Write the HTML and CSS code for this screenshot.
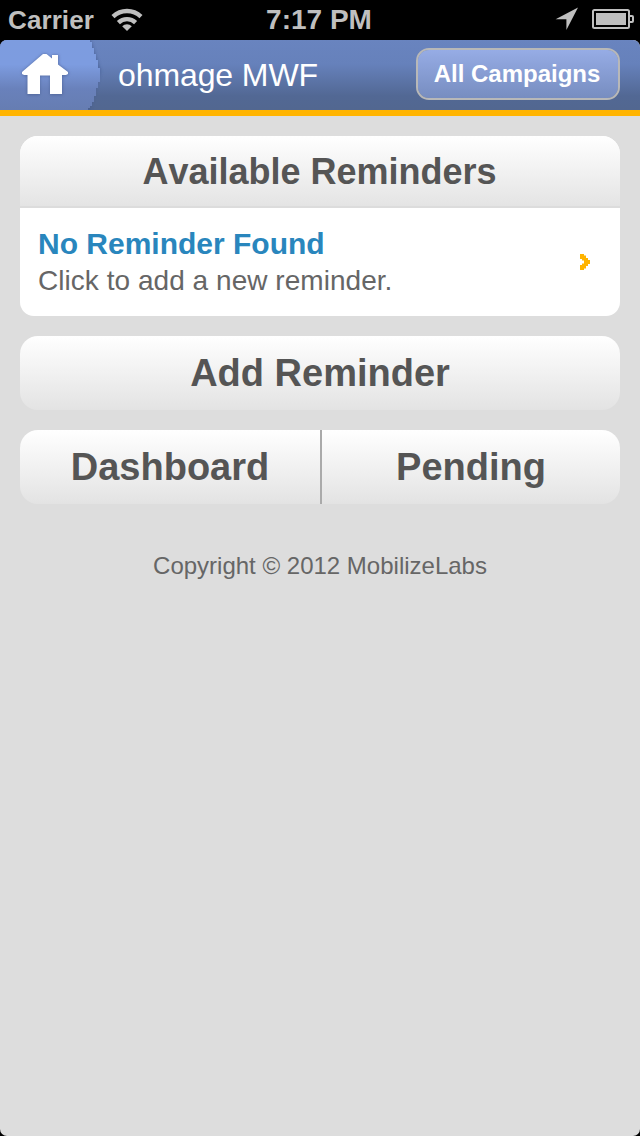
FILE: index.html
```html
<!DOCTYPE html>
<html lang="en">
<head>
<meta charset="utf-8">
<title>ohmage MWF</title>
<link rel="stylesheet" href="styles.css">
</head>
<body>
<div class="status">
  <div class="status-left">
    <span class="carrier">Carrier</span>
    <svg class="wifi" width="32" height="23" viewBox="0 0 32 23" fill="none" stroke="#bfbfbf" stroke-width="4.4">
      <path d="M2 8.6 A20.5 20.5 0 0 1 30 8.6"/>
      <path d="M7.4 14.6 A12.4 12.4 0 0 1 24.6 14.6"/>
      <path d="M16 23 L11.2 18.2 A6.8 6.8 0 0 1 20.8 18.2 Z" fill="#bfbfbf" stroke="none"/>
    </svg>
  </div>
  <span class="time">7:17 PM</span>
  <div class="status-right">
    <svg width="24" height="24" viewBox="0 0 24 24"><path d="M23 0.5 L11.4 23 V12.2 H0.6 Z" fill="#bfbfbf"/></svg>
    <svg width="42" height="20" viewBox="0 0 42 20">
      <rect x="1" y="1" width="36" height="18" rx="1.5" fill="none" stroke="#bfbfbf" stroke-width="2"/>
      <rect x="4" y="4" width="30" height="12" fill="#bfbfbf"/>
      <path d="M38 7 H40 Q41 7 41 8 V12 Q41 13 40 13 H38" fill="none" stroke="#bfbfbf" stroke-width="2"/>
    </svg>
  </div>
</div>
<div class="app">
  <header class="header">
    <svg class="home" width="108" height="70" viewBox="0 0 108 70">
      <defs>
        <linearGradient id="homeFill" x1="0" y1="0" x2="0" y2="1">
          <stop offset="0" stop-color="#7d9cdf"/><stop offset=".35" stop-color="#7d9ce0"/>
          <stop offset=".7" stop-color="#6981bb"/><stop offset="1" stop-color="#667db2"/>
        </linearGradient>
        <filter id="soft" x="-20%" y="-20%" width="140%" height="140%"><feGaussianBlur stdDeviation="1.5"/></filter>
      </defs>
      <path d="M0 0 H91 L101 31 L90 70 H0 Z" fill="#435a91" opacity=".6" filter="url(#soft)"/>
      <path d="M0 0 H90 V2 H92 V8 H94 V14 H96 V20 H98 V28 H100 V42 H98 V48 H96 V56 H94 V62 H92 V66 H90 V68 H88 V70 H0 Z" fill="url(#homeFill)"/>
      <path d="M22 34 V32 L43 14 H46.5 L52 19 V15 H58.5 V24.5 L68.5 32 V34 L66 36 H62.5 V55 H50 V36 H40 V55 H27 V36 H24 Z" fill="#465b8d" opacity=".7" filter="url(#soft)"/>
      <path d="M22 34 V32 L43 14 H46.5 L52 18.5 V15 H58 V24.5 L68 32 V34 L66 35 H62 V54 H50 V35.5 H40 V54 H27.5 V35 H24 Z" fill="#fff"/>
    </svg>
    <span class="title">ohmage MWF</span>
    <button class="campaigns">All Campaigns</button>
  </header>
  <main class="content">
    <section class="card">
      <h1 class="card-head">Available Reminders</h1>
      <div class="row">
        <div class="row-text">
          <div class="row-title">No Reminder Found</div>
          <div class="row-sub">Click to add a new reminder.</div>
        </div>
        <svg width="10" height="16" viewBox="0 0 10 16"><path d="M0 0 H4 V1.5 H6 V4 H8 V6 H10 V10 H8 V12 H6 V14.5 H4 V16 H0 V11 H2 V9.5 H4 V6.5 H2 V5 H0 Z" fill="#ffb400"/></svg>
      </div>
    </section>
    <button class="bar">Add Reminder</button>
    <nav class="split">
      <a class="half">Dashboard</a>
      <a class="half half-right">Pending</a>
    </nav>
    <footer class="footer">Copyright © 2012 MobilizeLabs</footer>
  </main>
</div>
</body>
</html>
```
FILE: styles.css
```css
* { box-sizing: border-box; }
body {
  margin: 0;
  height: 1136px;
  display: flex;
  flex-direction: column;
  background: #000;
  font-family: "Liberation Sans", Arial, Helvetica, sans-serif;
}
svg { display: block; flex: none; }
button { border: 0; padding: 0; font-family: inherit; }
.status {
  height: 40px;
  padding: 0 6px 2px 8px;
  display: grid;
  grid-template-columns: 1fr auto 1fr;
  align-items: center;
  color: #bfbfbf;
  font-weight: bold;
}
.status-left, .status-right { display: flex; align-items: center; }
.status-left { gap: 17px; font-size: 26px; }
.carrier { padding-top: 2px; letter-spacing: 0.1px; }
.status-right { justify-content: flex-end; gap: 13px; }
.time { margin-right: 4px; padding-top: 2px; font-size: 28px; }
.app {
  flex: 1;
  display: flex;
  flex-direction: column;
  background: #ddd;
  border-radius: 7px;
  overflow: hidden;
}
.header {
  height: 76px;
  border-bottom: 6px solid #ffb400;
  padding-right: 20px;
  display: flex;
  align-items: center;
  background: linear-gradient(#6984bf 0, #6681bb 24px, #526894 56px, #526790 70px) padding-box;
}
.title { flex: 1; margin-left: 10px; color: #fff; font-size: 32px; letter-spacing: -0.1px; }
.campaigns {
  width: 204px;
  height: 52px;
  margin-top: -2px;
  padding-right: 2px;
  border: 2px solid #b8b8b8;
  border-radius: 13px;
  background: linear-gradient(#96ace5, #778dc0) padding-box;
  color: #fff;
  font-size: 24px;
  font-weight: bold;
}
.content { padding: 20px; display: flex; flex-direction: column; gap: 20px; }
.card { border-radius: 18px 18px 14px 14px; overflow: hidden; background: #fff; }
.card-head {
  margin: 0;
  height: 72px;
  padding-right: 1px;
  border-bottom: 2px solid #dcdcdc;
  background: linear-gradient(#fff, #e4e4e4);
  color: #555;
  font-size: 36px;
  font-kerning: none;
  line-height: 71px;
  text-align: center;
}
.row {
  height: 108px;
  padding: 0 30px 0 18px;
  display: flex;
  align-items: center;
  justify-content: space-between;
}
.row-title { color: #2986bd; font-size: 30px; font-weight: bold; line-height: 36px; }
.row-sub { color: #666; font-size: 28px; line-height: 37px; letter-spacing: 0.04px; }
.bar, .half {
  height: 74px;
  background: linear-gradient(#fff, #e3e3e3);
  color: #555;
  font-size: 38px;
  font-weight: bold;
  line-height: 74px;
  text-align: center;
}
.bar { border-radius: 18px; }
.split { display: flex; border-radius: 18px; overflow: hidden; }
.half { width: 300px; }
.half-right { border-left: 2px solid #aaa; }
.footer { margin-top: 28px; color: #666; font-size: 24px; line-height: 28px; text-align: center; }
```
